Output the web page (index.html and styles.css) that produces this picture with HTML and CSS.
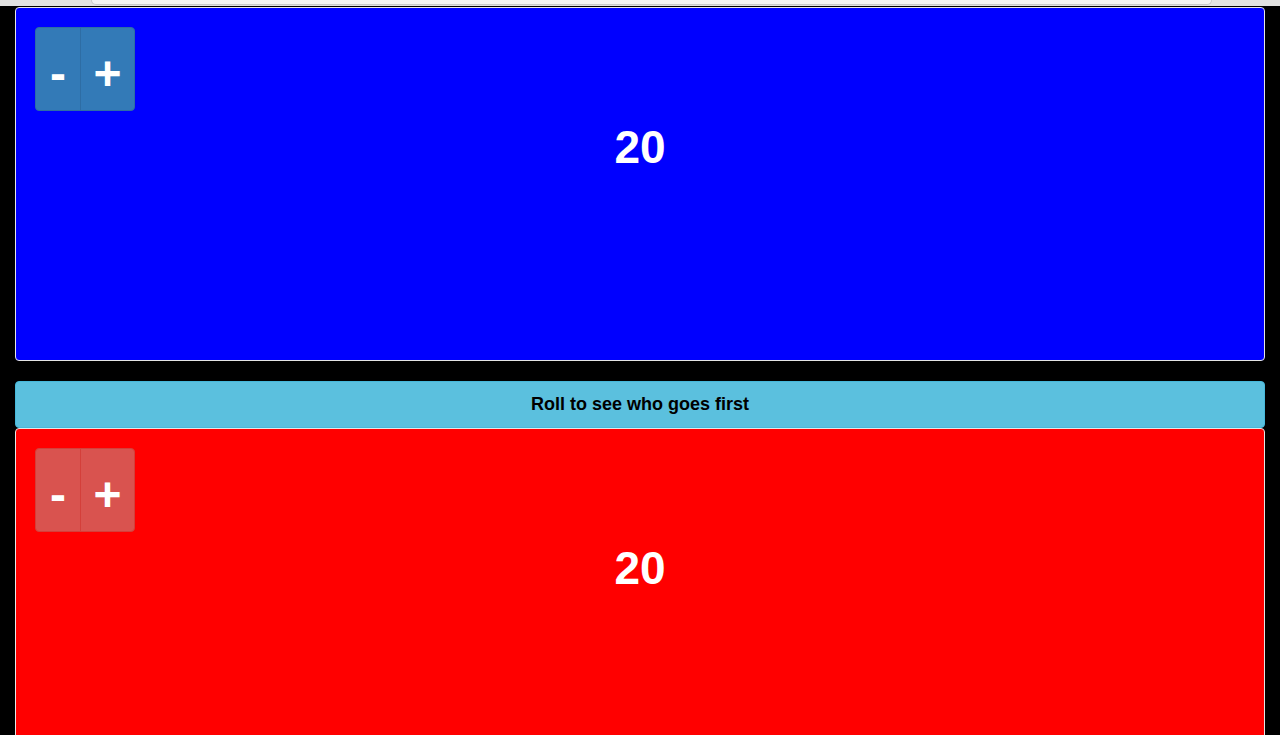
FILE: index.html
```html
<!DOCTYPE html>
<html lang="en">
<head>
    <meta charset="UTF-8">
    <meta name="viewport" content="width=device-width, initial-scale=1.0">
    <title>Life Counter</title>
    <link rel="stylesheet" href="styles.css">
</head>
<body>
    <div class="topbar"><div class="address"></div></div>
    <div class="container">
        <div class="player player-blue">
            <div class="counter-buttons">
                <button class="btn btn-primary btn-minus" onclick="changeLife('blue', -1)">-</button>
                <button class="btn btn-primary btn-plus" onclick="changeLife('blue', 1)">+</button>
            </div>
            <div class="life" id="life-blue">20</div>
        </div>
        <button class="roll" onclick="roll()">Roll to see who goes first</button>
        <div class="player player-red">
            <div class="counter-buttons">
                <button class="btn btn-danger btn-minus" onclick="changeLife('red', -1)">-</button>
                <button class="btn btn-danger btn-plus" onclick="changeLife('red', 1)">+</button>
            </div>
            <div class="life" id="life-red">20</div>
        </div>
    </div>
    <script>
        function changeLife(player, amount) {
            var el = document.getElementById('life-' + player);
            el.innerText = parseInt(el.innerText) + amount;
        }

        function roll() {
            var winner = Math.random() < 0.5 ? 'Blue' : 'Red';
            document.querySelector('.roll').innerText = winner + ' goes first';
        }
    </script>
</body>
</html>
```

FILE: styles.css
```css
body {
    margin: 0;
    background: #000;
    font-family: "Liberation Sans", Arial, sans-serif;
}
.topbar {
    height: 6px;
    background: #e2e2e2;
}
.topbar .address {
    height: 4px;
    margin: 0 68px 0 91px;
    background: #f4f4f4;
    border: 1px solid #c9c9c9;
    border-top: none;
    border-radius: 0 0 5px 5px;
}
.container {
    padding: 1px 15px 0;
}
.player {
    height: 354px;
    box-sizing: border-box;
    border: 1px solid #e6e6e6;
    border-radius: 4px;
    padding: 19px;
    color: white;
}
.player-blue {
    background: #0000ff;
}
.player-red {
    background: #ff0000;
}
.counter-buttons {
    display: flex;
}
.btn {
    height: 84px;
    box-sizing: border-box;
    padding: 9px 0 0;
    margin: 0;
    line-height: 73px;
    font-family: "Liberation Sans", Arial, sans-serif;
    font-size: 48px;
    font-weight: bold;
    color: white;
    cursor: pointer;
}
.btn-minus {
    width: 46px;
    border-radius: 4px 0 0 4px;
}
.btn-plus {
    width: 55px;
    margin-left: -1px;
    border-radius: 0 4px 4px 0;
}
.btn-primary {
    background: #337ab7;
    border: 1px solid #2e6da4;
}
.btn-danger {
    background: #d9534f;
    border: 1px solid #d43f3a;
}
.life {
    margin-top: 11px;
    text-align: center;
    font-size: 46px;
    font-weight: bold;
    line-height: 1.1;
}
.roll {
    display: block;
    width: 100%;
    height: 47px;
    margin-top: 20px;
    box-sizing: border-box;
    background: #5bc0de;
    border: 1px solid #46b8da;
    border-radius: 4px;
    font-family: "Liberation Sans", Arial, sans-serif;
    font-size: 18px;
    font-weight: bold;
    color: #000;
    cursor: pointer;
}
```
